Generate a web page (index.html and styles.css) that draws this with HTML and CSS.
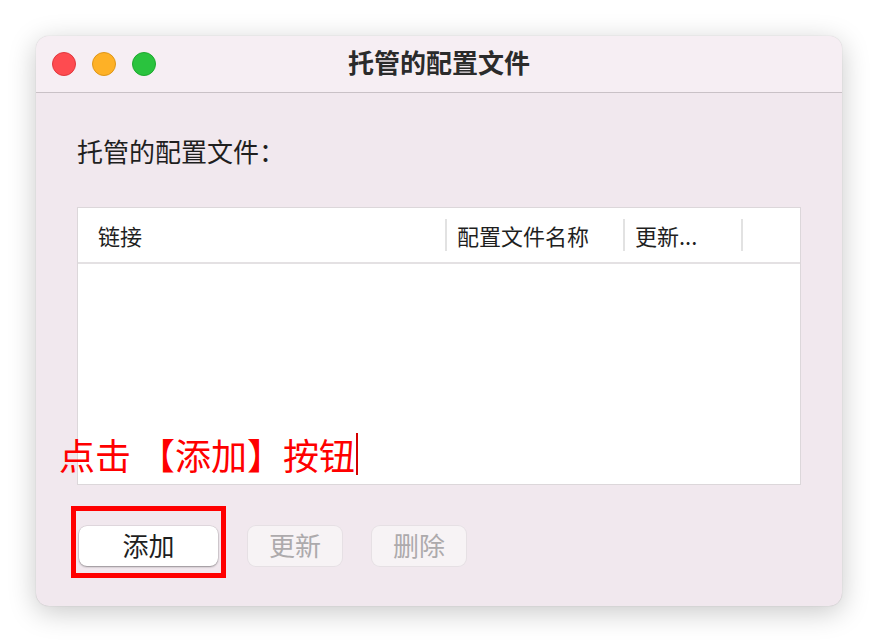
FILE: index.html
```html
<!DOCTYPE html>
<html lang="zh-CN">
<head>
    <meta charset="UTF-8">
    <meta name="viewport" content="width=device-width, initial-scale=1.0">
    <title>托管的配置文件</title>
    <link rel="stylesheet" href="styles.css">
</head>
<body>
    <div class="window">
        <div class="title-bar">
            <div class="traffic-lights">
                <span class="light light-close"></span>
                <span class="light light-min"></span>
                <span class="light light-max"></span>
            </div>
            <div class="window-title">托管的配置文件</div>
        </div>

        <div class="window-body">
            <div class="section-label">托管的配置文件：</div>

            <div class="table">
                <div class="table-header">
                    <div class="col col-link">链接</div>
                    <div class="col col-name">配置文件名称</div>
                    <div class="col col-update">更新...</div>
                    <div class="col col-rest"></div>
                </div>
                <div class="table-rows"></div>
            </div>

            <div class="button-row">
                <button class="btn btn-primary">添加</button>
                <button class="btn btn-disabled" disabled>更新</button>
                <button class="btn btn-disabled" disabled>删除</button>
            </div>
        </div>

        <!-- annotation overlay -->
        <div class="note">点击 【添加】按钮<span class="caret"></span></div>
        <div class="highlight-box"></div>
    </div>
</body>
</html>
```

FILE: styles.css
```css
* {
    margin: 0;
    padding: 0;
    box-sizing: border-box;
}

body {
    font-family: "Noto Sans CJK SC", "Noto Sans", sans-serif;
    background: #ffffff;
    width: 878px;
    height: 642px;
    padding: 36px;
    overflow: hidden;
}

.window {
    position: relative;
    width: 806px;
    height: 570px;
    background: #f1e8ee;
    border-radius: 13px;
    box-shadow: 0 6px 28px rgba(0,0,0,0.22), 0 0 1px rgba(0,0,0,0.25);
    overflow: hidden;
}

.title-bar {
    position: relative;
    height: 57px;
    background: #f6eef3;
    border-bottom: 1px solid #c9c1c6;
    display: flex;
    align-items: center;
    justify-content: center;
}

.traffic-lights {
    position: absolute;
    left: 16px;
    top: 16px;
    display: flex;
    gap: 16px;
}

.light {
    width: 24px;
    height: 24px;
    border-radius: 50%;
}

.light-close {
    background: #fe4b50;
    border: 1px solid #e0383d;
}

.light-min {
    background: #feb126;
    border: 1px solid #de9618;
}

.light-max {
    background: #2ac33e;
    border: 1px solid #1ea92e;
}

.window-title {
    font-size: 26px;
    font-weight: bold;
    color: #2b2b2b;
    line-height: 34px;
    padding-bottom: 5px;
}

.window-body {
    padding: 41px 41px 0 41px;
}

.section-label {
    font-size: 26px;
    line-height: 34px;
    color: #1f1f1f;
    margin-bottom: 39px;
}

.table {
    height: 278px;
    background: #ffffff;
    border: 1px solid #dcd7da;
}

.table-header {
    height: 56px;
    display: flex;
    align-items: center;
    border-bottom: 2px solid #e4e1e3;
}

.col {
    font-size: 22px;
    color: #1f1f1f;
    height: 32px;
    line-height: 32px;
}

.col-link {
    width: 367px;
    padding-left: 20px;
}

.col-name {
    width: 178px;
    padding-left: 10px;
    border-left: 2px solid #e2e2e2;
}

.col-update {
    width: 118px;
    padding-left: 10px;
    border-left: 2px solid #e2e2e2;
}

.col-rest {
    border-left: 2px solid #e2e2e2;
}

.button-row {
    display: flex;
    gap: 30px;
    margin-top: 41px;
    padding-left: 2px;
}

.btn {
    height: 40px;
    border-radius: 8px;
    font-family: inherit;
    font-size: 26px;
    line-height: 36px;
    padding-bottom: 3px;
    border: none;
}

.btn-primary {
    width: 139px;
    background: #ffffff;
    color: #1f1f1f;
    box-shadow: 0 1px 2px rgba(0,0,0,0.35), 0 0 0 0.5px rgba(0,0,0,0.12);
}

.btn-disabled {
    width: 94px;
    background: #f7f3f5;
    color: #adaaac;
    box-shadow: 0 0 0 1px #e6e0e4;
}

.note {
    position: absolute;
    left: 23px;
    top: 394px;
    font-size: 36px;
    line-height: 48px;
    color: #ff0000;
    display: flex;
    align-items: center;
}

.caret {
    display: inline-block;
    width: 2px;
    height: 42px;
    background: #d40000;
    margin-left: 1px;
}

.highlight-box {
    position: absolute;
    left: 35px;
    top: 470px;
    width: 155px;
    height: 72px;
    border: 5px solid #ff0000;
}
```
